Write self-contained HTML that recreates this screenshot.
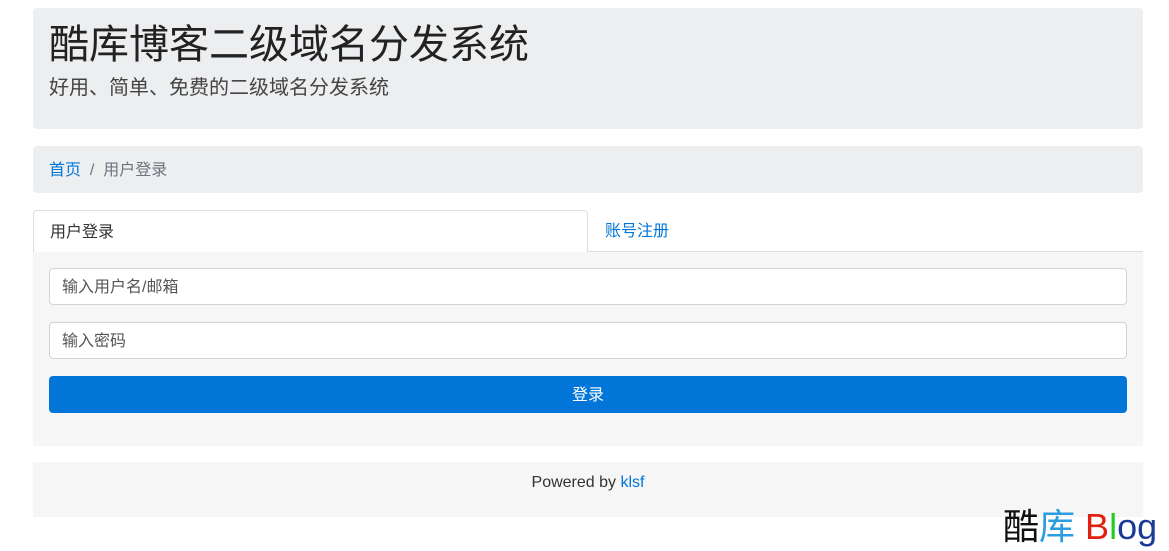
<!DOCTYPE html>
<html><head><meta charset="utf-8"><style>
*{box-sizing:border-box;margin:0;padding:0}
body{width:1169px;height:551px;background:#fff;font-family:"Liberation Sans","Noto Sans CJK SC",sans-serif;color:#212529;position:relative;overflow:hidden}
.j{position:absolute;left:33px;top:8px;width:1110px;height:121px;background:#eceef0;border-radius:4px}
.j h1{position:absolute;left:16px;top:13px;font-size:40px;font-weight:400;line-height:48px;color:#222}
.j p{position:absolute;left:16px;top:67px;font-size:20px;line-height:26px;color:#444}
.bc{position:absolute;left:33px;top:146px;width:1110px;height:47px;background:#eceef0;border-radius:4px;font-size:16px;line-height:50px;padding-left:16px;color:#6c757d}
.bc a{color:#0275d8;text-decoration:none}
.tab1{position:absolute;left:33px;top:210px;width:555px;height:42px;border:1px solid #ddd;border-bottom:none;border-radius:4px 4px 0 0;background:#fff;font-size:16px;line-height:43px;padding-left:16px;color:#333}
.tab2{position:absolute;left:605px;top:210px;font-size:16px;line-height:44px;color:#0275d8}
.line{position:absolute;left:588px;top:251px;width:555px;height:1px;background:#ddd}
.panel{position:absolute;left:33px;top:252px;width:1110px;height:194px;background:#f6f6f6}
.in{position:absolute;left:49px;width:1078px;height:37px;border:1px solid #ced4da;border-radius:4px;background:#fff;font-size:16px;line-height:38px;padding-left:12px;color:#555}
.btn{position:absolute;left:49px;top:376px;width:1078px;height:37px;background:#0275d8;border-radius:4px;color:#fff;text-align:center;line-height:39px;font-size:16px}
.ft{position:absolute;left:33px;top:462px;width:1110px;height:55px;background:#f6f6f6;text-align:center;font-size:16px;line-height:42px;color:#333}
.ft a{color:#0275d8}
.logo{position:absolute;left:1003px;top:504px;font-size:36px;line-height:46px;white-space:nowrap}
</style></head><body>
<div class="j"><h1>酷库博客二级域名分发系统</h1><p>好用、简单、免费的二级域名分发系统</p></div>
<div class="bc"><a>首页</a> &nbsp;/&nbsp; 用户登录</div>
<div class="tab1">用户登录</div><div class="tab2">账号注册</div><div class="line"></div>
<div class="panel"></div>
<div class="in" style="top:268px">输入用户名/邮箱</div>
<div class="in" style="top:322px">输入密码</div>
<div class="btn">登录</div>
<div class="ft">Powered by <a>klsf</a></div>
<div class="logo"><span style="color:#111">酷</span><span style="color:#2a9de0">库</span> <span style="color:#e02010">B</span><span style="color:#22cc22">l</span><span style="color:#1a3a9a">og</span></div>
</body></html>
